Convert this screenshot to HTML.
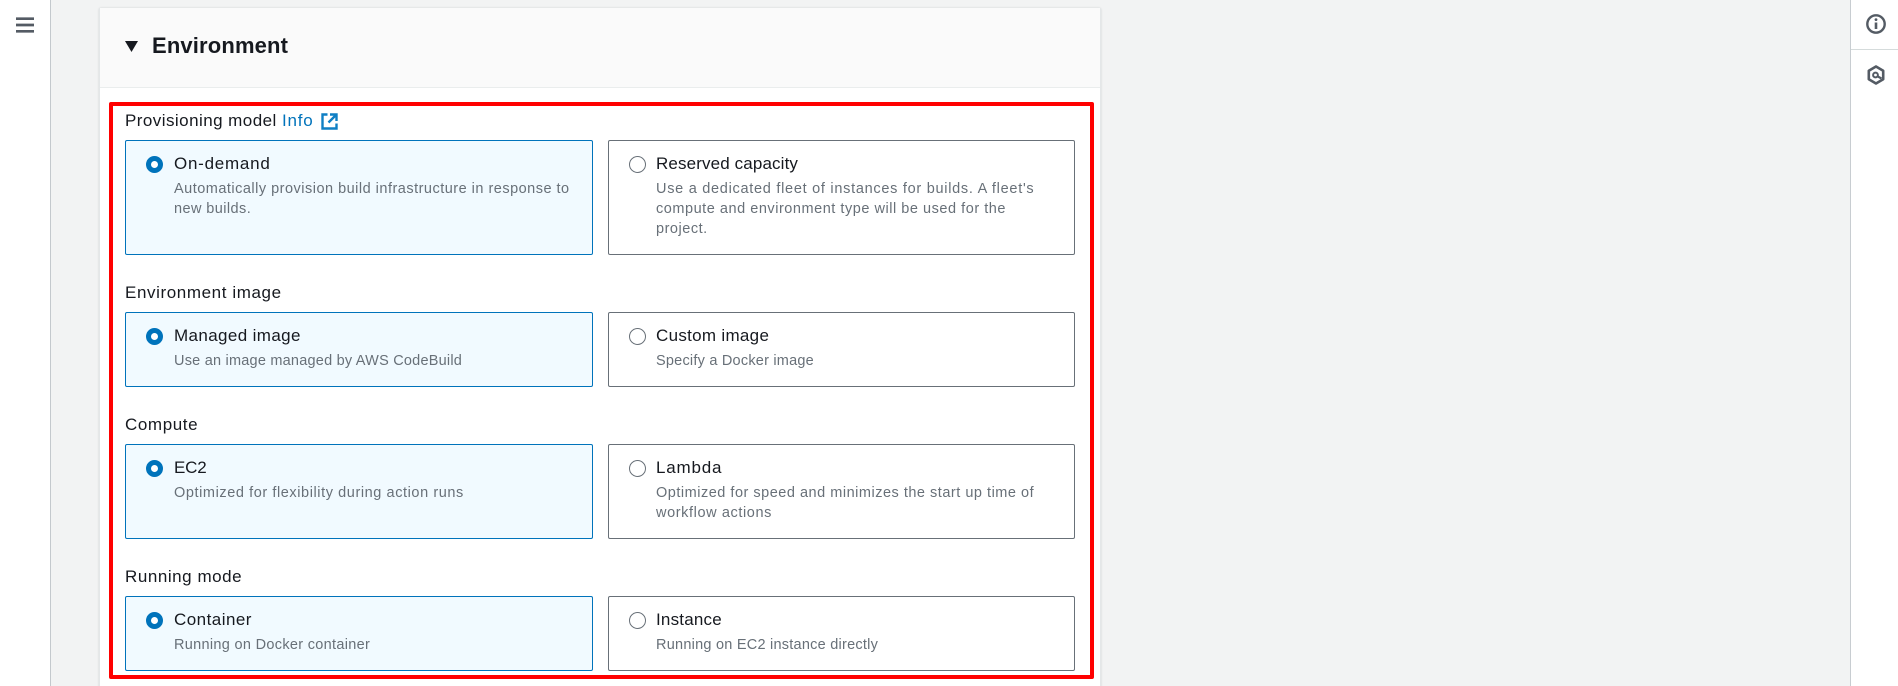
<!DOCTYPE html>
<html><head><meta charset="utf-8"><style>
html,body{margin:0;padding:0;width:1898px;height:686px;overflow:hidden}
body{background:#f2f3f3;font-family:"Liberation Sans",sans-serif;color:#16191f}
#w{position:relative;width:1898px;height:686px;overflow:hidden}
.a{position:absolute;box-sizing:border-box}
.t{position:absolute;white-space:nowrap}
.lab{font-size:17px;line-height:20px;color:#16191f}
.ti{font-size:17px;line-height:20px;color:#16191f}
.d{font-size:14.5px;line-height:20px;color:#687078}
.c{position:absolute;box-sizing:border-box;border:1px solid #687078;border-radius:2px;background:#fff}
.c.s{border-color:#0073bb;background:#f1faff}
.r{position:absolute;box-sizing:border-box;width:17px;height:17px;border-radius:50%;border:1.3px solid #687078;background:#fff}
.r.s{border:5.5px solid #0073bb;background:#fff}
</style></head><body><div id="w">
<div class="a" style="left:0;top:0;width:51px;height:686px;background:#fff;border-right:1px solid #c4c9cd"></div>
<svg class="a" style="left:16px;top:17px" width="18" height="16" viewBox="0 0 18 16"><path d="M0 1.7H18M0 8H18M0 14.3H18" stroke="#545b64" stroke-width="2.7"/></svg>
<div class="a" style="left:1850px;top:0;width:48px;height:686px;background:#fff;border-left:1px solid #c8cdd1"></div>
<div class="a" style="left:1851px;top:49px;width:47px;height:1px;background:#d5dbdb"></div>
<svg class="a" style="left:1866px;top:14px" width="20" height="20" viewBox="0 0 20 20"><circle cx="10" cy="10" r="8.7" fill="none" stroke="#545b64" stroke-width="2.4"/><path d="M10 8.5V15" stroke="#545b64" stroke-width="2.6" fill="none"/><circle cx="10" cy="5.6" r="1.4" fill="#545b64"/></svg>
<svg class="a" style="left:1866px;top:65px" width="20" height="20" viewBox="0 0 20 20"><path d="M10 1.5L17.2 5.7V14.3L10 18.5L2.8 14.3V5.7Z" fill="none" stroke="#545b64" stroke-width="2.6" stroke-linejoin="round"/><circle cx="9.5" cy="10" r="2.4" fill="none" stroke="#545b64" stroke-width="2"/><path d="M11.3 11.2L15.5 13.5" stroke="#545b64" stroke-width="2.2"/></svg>

<div class="a" style="left:99px;top:8px;width:1002px;height:690px;background:#fff;border:1px solid #e4e7e8;border-top:0;border-radius:2px;box-shadow:0 0 2px rgba(0,28,36,.15)"></div>
<div class="a" style="left:100px;top:8px;width:1000px;height:80px;background:#fafafa;border-bottom:1px solid #eaeded"></div>
<svg class="a" style="left:125px;top:41px" width="13" height="11" viewBox="0 0 13 11"><path d="M0 0H13L6.5 11Z" fill="#16191f"/></svg>
<div class="t" style="left:152px;top:32px;font-size:22px;line-height:28px;font-weight:700;letter-spacing:.15px;color:#16191f">Environment</div>

<div class="a" style="left:109px;top:102px;width:985px;height:577px;border:4px solid #f00;border-radius:2px"></div>

<div class="t lab" style="left:125px;top:111px;letter-spacing:.45px">Provisioning model</div>
<div class="t lab" style="left:282px;top:111px;letter-spacing:.8px;color:#0073bb">Info</div>
<svg class="a" style="left:321px;top:113px" width="17" height="17" viewBox="0 0 17 17"><path d="M6.5 1.5H1.5V15.5H15.5V10.5M9 1.5H15.5V8M15 2L7.5 9.5" fill="none" stroke="#0f7fc4" stroke-width="2.4"/></svg>

<div class="c s" style="left:125px;top:140px;width:468px;height:115px"></div>
<div class="r s" style="left:146px;top:156px"></div>
<div class="t ti" style="left:174px;top:154px;letter-spacing:.75px">On-demand</div>
<div class="t d" style="left:174px;top:179px;letter-spacing:.49px">Automatically provision build infrastructure in response to</div>
<div class="t d" style="left:174px;top:199px;letter-spacing:.42px">new builds.</div>
<div class="c" style="left:608px;top:140px;width:467px;height:115px"></div>
<div class="r" style="left:629px;top:156px"></div>
<div class="t ti" style="left:656px;top:154px;letter-spacing:.13px">Reserved capacity</div>
<div class="t d" style="left:656px;top:179px;letter-spacing:.72px">Use a dedicated fleet of instances for builds. A fleet's</div>
<div class="t d" style="left:656px;top:199px;letter-spacing:.53px">compute and environment type will be used for the</div>
<div class="t d" style="left:656px;top:219px;letter-spacing:.52px">project.</div>

<div class="t lab" style="left:125px;top:283px;letter-spacing:.6px">Environment image</div>
<div class="c s" style="left:125px;top:312px;width:468px;height:75px"></div>
<div class="r s" style="left:146px;top:328px"></div>
<div class="t ti" style="left:174px;top:326px;letter-spacing:.38px">Managed image</div>
<div class="t d" style="left:174px;top:351px;letter-spacing:.22px">Use an image managed by AWS CodeBuild</div>
<div class="c" style="left:608px;top:312px;width:467px;height:75px"></div>
<div class="r" style="left:629px;top:328px"></div>
<div class="t ti" style="left:656px;top:326px;letter-spacing:.3px">Custom image</div>
<div class="t d" style="left:656px;top:351px;letter-spacing:.22px">Specify a Docker image</div>

<div class="t lab" style="left:125px;top:415px;letter-spacing:.6px">Compute</div>
<div class="c s" style="left:125px;top:444px;width:468px;height:95px"></div>
<div class="r s" style="left:146px;top:460px"></div>
<div class="t ti" style="left:174px;top:458px;letter-spacing:-.2px">EC2</div>
<div class="t d" style="left:174px;top:483px;letter-spacing:.58px">Optimized for flexibility during action runs</div>
<div class="c" style="left:608px;top:444px;width:467px;height:95px"></div>
<div class="r" style="left:629px;top:460px"></div>
<div class="t ti" style="left:656px;top:458px;letter-spacing:.8px">Lambda</div>
<div class="t d" style="left:656px;top:483px;letter-spacing:.51px">Optimized for speed and minimizes the start up time of</div>
<div class="t d" style="left:656px;top:503px;letter-spacing:.6px">workflow actions</div>

<div class="t lab" style="left:125px;top:567px;letter-spacing:.55px">Running mode</div>
<div class="c s" style="left:125px;top:596px;width:468px;height:75px"></div>
<div class="r s" style="left:146px;top:612px"></div>
<div class="t ti" style="left:174px;top:610px;letter-spacing:.47px">Container</div>
<div class="t d" style="left:174px;top:635px;letter-spacing:.31px">Running on Docker container</div>
<div class="c" style="left:608px;top:596px;width:467px;height:75px"></div>
<div class="r" style="left:629px;top:612px"></div>
<div class="t ti" style="left:656px;top:610px;letter-spacing:.2px">Instance</div>
<div class="t d" style="left:656px;top:635px;letter-spacing:.24px">Running on EC2 instance directly</div>
</div></body></html>
